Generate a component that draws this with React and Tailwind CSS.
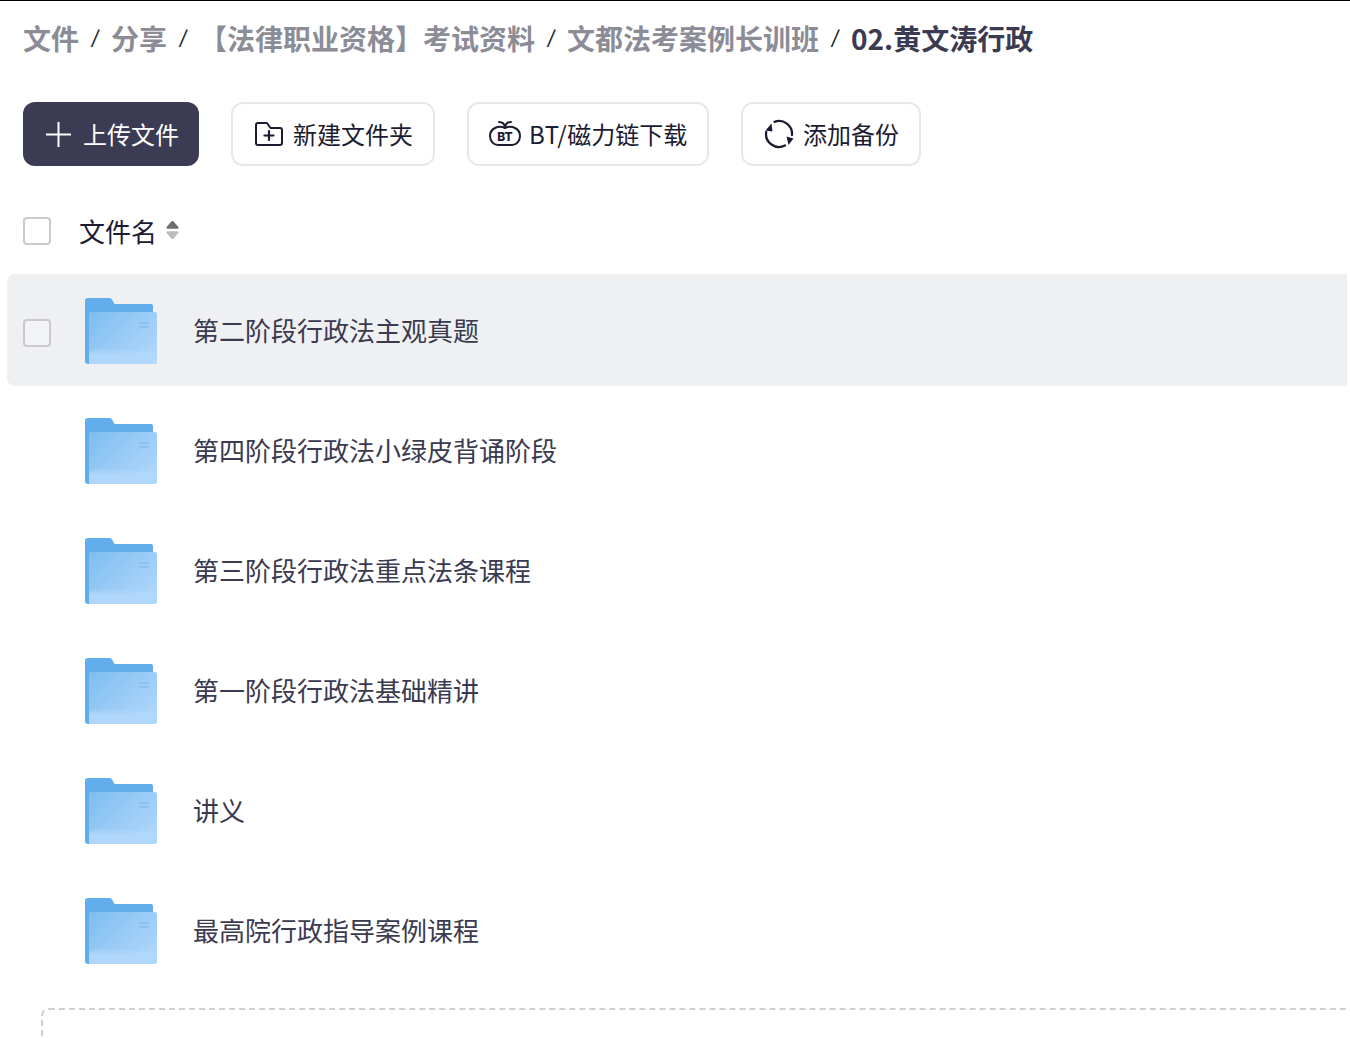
import React from 'react';

const FONT = 'font-["Noto_Sans_CJK_SC","Inter",sans-serif]';

const crumbs = ['文件', '分享', '【法律职业资格】考试资料', '文都法考案例长训班'];

const rows = [
  '第二阶段行政法主观真题',
  '第四阶段行政法小绿皮背诵阶段',
  '第三阶段行政法重点法条课程',
  '第一阶段行政法基础精讲',
  '讲义',
  '最高院行政指导案例课程',
];

const FolderIcon = ({ id }) => (
  <svg width="72" height="66" viewBox="0 0 72 66" className="shrink-0">
    <defs>
      <linearGradient id={`front-${id}`} x1="0" y1="0" x2="1" y2="0.75">
        <stop offset="0" stopColor="#7fbdf0" />
        <stop offset="1" stopColor="#aed6fb" />
      </linearGradient>
      <linearGradient id={`band-${id}`} x1="0" y1="0" x2="0" y2="1">
        <stop offset="0" stopColor="#b0d8fc" stopOpacity="0" />
        <stop offset="0.45" stopColor="#b0d8fc" />
        <stop offset="1" stopColor="#b0d8fc" />
      </linearGradient>
    </defs>
    <path d="M3 0h21c1.500 0 2.500.6 3.200 1.800L29.500 6H66a2 2 0 0 1 2 2v50H4v8H3a3 3 0 0 1-3-3V3a3 3 0 0 1 3-3z" fill="#62aeec" />
    <path d="M4 16a2 2 0 0 1 2-2h64a2 2 0 0 1 2 2v47a3 3 0 0 1-3 3H4z" fill={`url(#front-${id})`} />
    <path d="M4 50h68v13a3 3 0 0 1-3 3H4z" fill={`url(#band-${id})`} />
    <rect x="54" y="24" width="10" height="2" fill="#8cc2f0" />
    <rect x="54" y="28" width="10" height="2" fill="#8cc2f0" />
  </svg>
);

const NewFolderIcon = () => (
  <svg width="28" height="24" viewBox="0 0 28 24" fill="none" stroke="#1b1b32" strokeWidth="2" strokeLinejoin="round" strokeLinecap="round">
    <path d="M1 3a2 2 0 0 1 2-2h9l3.500 5H25a2 2 0 0 1 2 2v13a2 2 0 0 1-2 2H3a2 2 0 0 1-2-2z" />
    <path d="M14 9v9M9.500 13.500h9" strokeWidth="2.200" />
  </svg>
);

const BtIcon = () => (
  <svg width="32" height="28" viewBox="0 0 32 28" fill="none" stroke="#1b1b32" strokeWidth="2" strokeLinecap="round">
    <path d="M10 2c3 0 5.500 1.500 6 5.500C16.500 3.500 19 2 22 2" />
    <path d="M16 8c-3-1.500-7-1.500-10 0C3 9.500 1 12 1 16c0 5 3.500 9 8 9h14c4.500 0 8-4 8-9 0-4-2-6.500-5-8-3-1.500-7-1.500-10 0z" />
    <text x="16" y="21" textAnchor="middle" fill="#1b1b32" stroke="none" fontSize="12" fontWeight="800" fontFamily="Inter, sans-serif">BT</text>
  </svg>
);

const BackupIcon = () => (
  <svg width="30" height="30" viewBox="0 0 30 30" fill="none" stroke="#1b1b32" strokeWidth="2.300" strokeLinecap="round">
    <path d="M10.500 2.800A13 13 0 0 1 28 16" />
    <path d="M21 26.500A13 13 0 0 1 2.200 13" />
    <path d="M22.500 17.500 29.500 19.500 24.500 26z" fill="#1b1b32" stroke="none" />
    <path d="M1.500 11.500 7.500 4.500 8.500 12.500z" fill="#1b1b32" stroke="none" />
  </svg>
);

const SortIcon = () => (
  <svg width="13" height="20" viewBox="0 0 14 20">
    <path d="M6 .700a1.400 1.400 0 0 1 2 0l5.300 6.200c.6.800.2 1.700-.8 1.700H1.500c-1 0-1.400-.9-.8-1.700z" fill="#6e6e6e" />
    <path d="M6 19.300a1.400 1.400 0 0 0 2 0l5.300-6.200c.6-.8.2-1.700-.8-1.700H1.500c-1 0-1.400.9-.8 1.700z" fill="#bdbdbd" />
  </svg>
);

const Checkbox = ({ className = '' }) => (
  <div className={`w-[28px] h-[28px] rounded-[4px] border-2 border-[#c9c9ce] shrink-0 ${className}`} />
);

const ToolButton = ({ icon, label, className = '' }) => (
  <button className={`h-[64px] flex items-center rounded-[12px] border-2 border-[#e8e8e8] bg-white text-[24px] text-[#1b1b32] ${className}`}>
    {icon}
    {label}
  </button>
);

export default function App() {
  return (
    <div className={`h-screen overflow-hidden bg-white border-t border-black ${FONT}`}>
      <div className="h-[73px] pl-[23px] flex items-center text-[28px] font-bold text-[#8c8c96]">
        {crumbs.map((c) => (
          <React.Fragment key={c}>
            <span>{c}</span>
            <span className='w-[32px] text-center font-["Inter"] italic text-[20px] font-normal text-[#1b1b32]'>/</span>
          </React.Fragment>
        ))}
        <span className="text-[#3a3a50]">02.黄文涛行政</span>
      </div>

      <div className="mt-[28px] pl-[23px] flex gap-[32px]">
        <button className="w-[176px] h-[64px] flex items-center gap-[12px] pl-[23px] rounded-[12px] bg-[#3b3b54] text-[24px] text-white">
          <svg width="25" height="25" viewBox="0 0 25 25" stroke="#fff" strokeWidth="2">
            <path d="M12.500 0v25M0 12.500h25" />
          </svg>
          上传文件
        </button>
        <ToolButton className="w-[204px] pl-[22px] gap-[10px]" icon={<NewFolderIcon />} label="新建文件夹" />
        <ToolButton
          className="w-[242px] pl-[20px] gap-[8px]"
          icon={<BtIcon />}
          label={<span><span className="tracking-[0.6px]">BT/</span>磁力链下载</span>}
        />
        <ToolButton className="w-[180px] pl-[21px] gap-[9px]" icon={<BackupIcon />} label="添加备份" />
      </div>

      <div className="mt-[50px] pl-[23px] flex items-center h-[30px]">
        <Checkbox />
        <span className="ml-[28px] pb-[2px] text-[26px] text-[#1b1b32]">文件名</span>
        <span className="ml-[9px] pb-[2px]"><SortIcon /></span>
      </div>

      <div className="mt-[28px] ml-[7px] mr-[3px]">
        {rows.map((name, i) => (
          <div
            key={name}
            className={`h-[112px] mb-[8px] pt-[2px] flex items-center rounded-l-[8px] text-[26px] text-[#3a3a50] ${i === 0 ? 'bg-[#eff0f2]' : ''}`}
          >
            <div className="w-[78px] pl-[16px] pt-[4px]">
              {i === 0 && <Checkbox className="bg-[#f3f4f6]" />}
            </div>
            <FolderIcon id={i} />
            <span className="ml-[36px] pb-[4px]">{name}</span>
          </div>
        ))}
      </div>

      <div className="mt-[22px] ml-[41px] mr-[3px] h-[80px] border-2 border-r-0 border-dashed border-[#cfcfd4] rounded-tl-[8px]" />
    </div>
  );
}
